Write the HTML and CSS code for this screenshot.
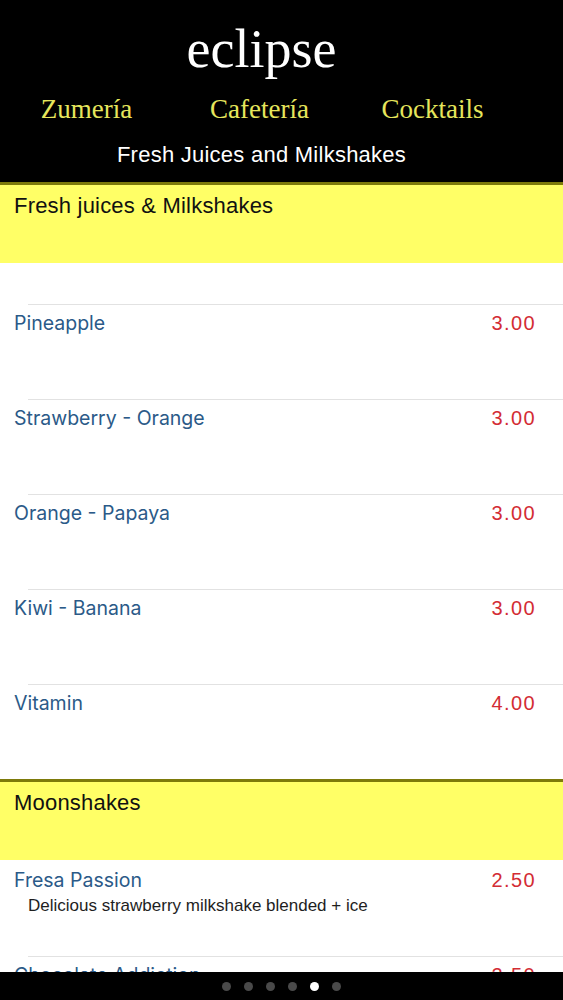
FILE: index.html
```html
<!DOCTYPE html>
<html lang="en">
<head>
<meta charset="utf-8">
<title>eclipse</title>
<link rel="stylesheet" href="styles.css">
</head>
<body>
<div class="screen">
  <header class="top">
    <h1 class="brand">eclipse</h1>
    <nav class="tabs">
      <span class="tab">Zumería</span>
      <span class="tab">Cafetería</span>
      <span class="tab">Cocktails</span>
    </nav>
    <p class="subtitle">Fresh Juices and Milkshakes</p>
  </header>

  <section class="section">
    <h2 class="section-title">Fresh juices &amp; Milkshakes</h2>
    <div class="spacer"></div>
    <div class="row"><div class="line"><span class="name">Pineapple</span><span class="price">3.00</span></div></div>
    <div class="row"><div class="line"><span class="name">Strawberry - Orange</span><span class="price">3.00</span></div></div>
    <div class="row"><div class="line"><span class="name">Orange - Papaya</span><span class="price">3.00</span></div></div>
    <div class="row"><div class="line"><span class="name">Kiwi - Banana</span><span class="price">3.00</span></div></div>
    <div class="row"><div class="line"><span class="name">Vitamin</span><span class="price">4.00</span></div></div>
  </section>

  <section class="section">
    <h2 class="section-title">Moonshakes</h2>
    <div class="row row-first"><div class="line"><span class="name">Fresa Passion</span><span class="price">2.50</span></div>
      <p class="desc">Delicious strawberry milkshake blended + ice</p></div>
    <div class="row"><div class="line"><span class="name">Chocolate Addiction</span><span class="price">2.50</span></div></div>
  </section>

  <div class="pager">
    <span class="dot"></span><span class="dot"></span><span class="dot"></span><span class="dot"></span><span class="dot active"></span><span class="dot"></span>
  </div>
</div>
</body>
</html>
```

FILE: styles.css
```css
* { box-sizing: border-box; }
html, body { margin: 0; padding: 0; }
body {
  background: #fff;
  font-family: "Liberation Sans", Arial, sans-serif;
  height: 1000px;
  overflow: hidden;
}
.screen { height: 1000px; overflow: hidden; }

.top {
  background: #000;
  height: 182px;
  padding: 20px 40px 0 0;
  text-align: center;
}
.brand {
  margin: 0;
  font-family: "Liberation Serif", "Times New Roman", serif;
  font-weight: normal;
  font-size: 54px;
  line-height: 58px;
  color: #fff;
}
.tabs {
  margin: 15px 4px 0 0;
  display: grid;
  grid-template-columns: repeat(3, 1fr);
  font-family: "Liberation Serif", "Times New Roman", serif;
  font-size: 27px;
  line-height: 32px;
  color: #e6e65c;
}
.tab { text-align: center; }
.subtitle {
  margin: 17px 0 0;
  font-size: 22px;
  line-height: 26px;
  letter-spacing: 0.25px;
  color: #fff;
}

.section-title {
  margin: 0;
  height: 81px;
  border-top: 3px solid #7d7a0a;
  background: #ffff66;
  padding: 8px 14px 0;
  font-weight: normal;
  font-size: 22px;
  line-height: 26px;
  letter-spacing: 0.2px;
  color: #111;
}
.spacer { height: 41px; }

.row { height: 95px; }
.row::before {
  content: "";
  display: block;
  height: 1px;
  margin-left: 28px;
  background: #e2e2e2;
}
.row-first { height: 96px; padding-top: 7px; }
.row-first::before { display: none; }
.line {
  display: flex;
  justify-content: space-between;
  padding: 6px 27px 0 14px;
  font-size: 20px;
  line-height: 24px;
}
.row-first .line { padding-top: 1px; }
.name { color: #2b5a88; font-family: Inter, "Liberation Sans", sans-serif; font-size: 19.5px; }
.price { color: #d32c34; letter-spacing: 1.4px; }
.desc {
  margin: 4px 0 0 28px;
  font-size: 17px;
  line-height: 20px;
  color: #1e1e1e;
}

.pager {
  position: fixed;
  left: 0;
  right: 0;
  bottom: 0;
  height: 28px;
  background: #000;
  display: flex;
  justify-content: center;
  align-items: center;
  gap: 13px;
}
.dot {
  width: 9px;
  height: 9px;
  border-radius: 50%;
  background: #4a4a4a;
}
.dot.active { background: #fff; }
```
